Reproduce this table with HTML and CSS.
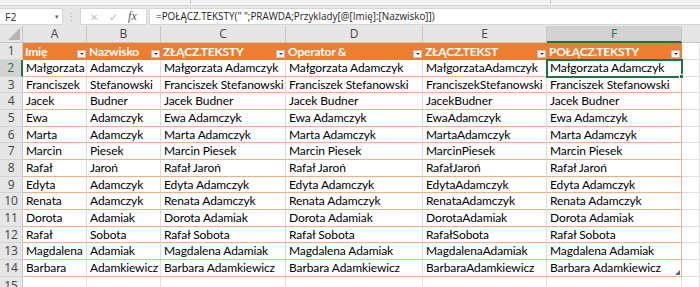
FILE: index.html
```html
<!DOCTYPE html>
<html lang="pl">
<head>
<meta charset="utf-8">
<title>Excel</title>
<link rel="stylesheet" href="styles.css">
</head>
<body>
<div class="app">
  <div class="ribbon-edge"><span class="tick t1"></span><span class="tick t2"></span></div>
  <div class="fbar">
    <div class="namebox"><span>F2</span><span class="nb-arrow">▾</span></div>
    <div class="dots">⋮</div>
    <div class="fbtns">
      <span class="fb-x">✕</span>
      <span class="fb-ok">✓</span>
      <span class="fb-fx">fx</span>
    </div>
    <div class="finput">=POŁĄCZ.TEKSTY(" ";PRAWDA;Przyklady[@[Imię]:[Nazwisko]])</div>
  </div>
  <div class="sheet">
    <div class="corner"><span class="corner-tri"></span></div>
    <div class="ch">A</div><div class="ch">B</div><div class="ch">C</div><div class="ch">D</div><div class="ch">E</div><div class="ch ch-sel">F</div><div class="ch ch-rest"></div>

    <div class="rh">1</div>
    <div class="th">Imię<span class="flt"></span></div>
    <div class="th">Nazwisko<span class="flt"></span></div>
    <div class="th">ZŁĄCZ.TEKSTY<span class="flt"></span></div>
    <div class="th">Operator &amp;<span class="flt"></span></div>
    <div class="th">ZŁĄCZ.TEKST<span class="flt"></span></div>
    <div class="th th-last">POŁĄCZ.TEKSTY<span class="flt"></span></div>
    <div class="g"></div>

    <div class="rh rh-sel">2</div>
    <div class="c">Małgorzata</div><div class="c">Adamczyk</div><div class="c">Małgorzata Adamczyk</div><div class="c">Małgorzata Adamczyk</div><div class="c">MałgorzataAdamczyk</div><div class="c cl sel">Małgorzata Adamczyk<span class="handle"></span></div><div class="g"></div>

    <div class="rh">3</div>
    <div class="c">Franciszek</div><div class="c">Stefanowski</div><div class="c">Franciszek Stefanowski</div><div class="c">Franciszek Stefanowski</div><div class="c">FranciszekStefanowski</div><div class="c cl">Franciszek Stefanowski</div><div class="g"></div>

    <div class="rh">4</div>
    <div class="c">Jacek</div><div class="c">Budner</div><div class="c">Jacek Budner</div><div class="c">Jacek Budner</div><div class="c">JacekBudner</div><div class="c cl">Jacek Budner</div><div class="g"></div>

    <div class="rh">5</div>
    <div class="c">Ewa</div><div class="c">Adamczyk</div><div class="c">Ewa Adamczyk</div><div class="c">Ewa Adamczyk</div><div class="c">EwaAdamczyk</div><div class="c cl">Ewa Adamczyk</div><div class="g"></div>

    <div class="rh">6</div>
    <div class="c">Marta</div><div class="c">Adamczyk</div><div class="c">Marta Adamczyk</div><div class="c">Marta Adamczyk</div><div class="c">MartaAdamczyk</div><div class="c cl">Marta Adamczyk</div><div class="g"></div>

    <div class="rh">7</div>
    <div class="c">Marcin</div><div class="c">Piesek</div><div class="c">Marcin Piesek</div><div class="c">Marcin Piesek</div><div class="c">MarcinPiesek</div><div class="c cl">Marcin Piesek</div><div class="g"></div>

    <div class="rh">8</div>
    <div class="c">Rafał</div><div class="c">Jaroń</div><div class="c">Rafał Jaroń</div><div class="c">Rafał Jaroń</div><div class="c">RafałJaroń</div><div class="c cl">Rafał Jaroń</div><div class="g"></div>

    <div class="rh">9</div>
    <div class="c">Edyta</div><div class="c">Adamczyk</div><div class="c">Edyta Adamczyk</div><div class="c">Edyta Adamczyk</div><div class="c">EdytaAdamczyk</div><div class="c cl">Edyta Adamczyk</div><div class="g"></div>

    <div class="rh">10</div>
    <div class="c">Renata</div><div class="c">Adamczyk</div><div class="c">Renata Adamczyk</div><div class="c">Renata Adamczyk</div><div class="c">RenataAdamczyk</div><div class="c cl">Renata Adamczyk</div><div class="g"></div>

    <div class="rh">11</div>
    <div class="c">Dorota</div><div class="c">Adamiak</div><div class="c">Dorota Adamiak</div><div class="c">Dorota Adamiak</div><div class="c">DorotaAdamiak</div><div class="c cl">Dorota Adamiak</div><div class="g"></div>

    <div class="rh">12</div>
    <div class="c">Rafał</div><div class="c">Sobota</div><div class="c">Rafał Sobota</div><div class="c">Rafał Sobota</div><div class="c">RafałSobota</div><div class="c cl">Rafał Sobota</div><div class="g"></div>

    <div class="rh">13</div>
    <div class="c">Magdalena</div><div class="c">Adamiak</div><div class="c">Magdalena Adamiak</div><div class="c">Magdalena Adamiak</div><div class="c">MagdalenaAdamiak</div><div class="c cl">Magdalena Adamiak</div><div class="g"></div>

    <div class="rh">14</div>
    <div class="c">Barbara</div><div class="c">Adamkiewicz</div><div class="c">Barbara Adamkiewicz</div><div class="c">Barbara Adamkiewicz</div><div class="c">BarbaraAdamkiewicz</div><div class="c cl last">Barbara Adamkiewicz<span class="resize"></span></div><div class="g"></div>

    <div class="rh rh-part">15</div>
    <div class="g"></div><div class="g"></div><div class="g"></div><div class="g"></div><div class="g"></div><div class="g"></div><div class="g"></div>
  </div>
</div>
</body>
</html>
```

FILE: styles.css
```css
* { box-sizing: border-box; }
html, body { margin: 0; padding: 0; }
body {
  width: 700px;
  height: 287px;
  overflow: hidden;
  background: #ffffff;
  font-family: Lato, "Liberation Sans", sans-serif;
}
.app { width: 700px; height: 287px; overflow: hidden; background: #e6e6e6; }

.ribbon-edge {
  position: relative;
  height: 6px;
  background: #f3f3f3;
  border-bottom: 1px solid #d9d9d9;
}
.tick { position: absolute; top: 0; width: 1px; height: 4px; background: #c8c8c8; }
.t1 { left: 190px; }
.t2 { left: 550px; }

.fbar {
  display: flex;
  align-items: center;
  height: 20px;
  background: #e6e6e6;
  padding-top: 1px;
}
.namebox {
  width: 63px;
  height: 17px;
  background: #ffffff;
  border: 1px solid #d6d6d6;
  border-left: none;
  display: flex;
  align-items: center;
  justify-content: space-between;
  padding: 0 3px 0 5px;
  font-family: "Open Sans", "Liberation Sans", sans-serif;
  font-size: 10.5px;
  color: #333;
}
.nb-arrow { font-size: 7px; color: #666; }
.dots {
  width: 17px;
  text-align: center;
  color: #b0b0b0;
  font-size: 11px;
  line-height: 1;
}
.fbtns {
  width: 67px;
  height: 17px;
  background: #ffffff;
  border: 1px solid #d6d6d6;
  display: flex;
  align-items: center;
  justify-content: space-around;
  padding: 0 4px;
  color: #bdbdbd;
  font-size: 11px;
}
.fb-x { font-size: 10px; }
.fb-fx { font-family: "Liberation Serif", serif; font-style: italic; color: #555; font-size: 12px; }
.finput {
  flex: 1;
  height: 17px;
  margin-left: 2px;
  background: #ffffff;
  border: 1px solid #d6d6d6;
  border-right: none;
  padding-left: 6px;
  font-family: "Open Sans", "Liberation Sans", sans-serif;
  font-size: 9.9px;
  line-height: 15px;
  color: #222;
  white-space: nowrap;
}

.sheet {
  display: grid;
  grid-template-columns: 23px 64px 74px 125px 137px 124px 135px 1fr;
  grid-template-rows: 17px 17px 17px 16px 17px 17px 16px 17px 17px 16px 17px 17px 16px 17px 17px 16px;
  font-size: 12px;
  letter-spacing: -0.1px;
  background: #ffffff;
}
.corner {
  position: relative;
  background: #e6e6e6;
  border-right: 1px solid #c6c6c6;
  border-bottom: 1px solid #c6c6c6;
}
.corner-tri {
  position: absolute;
  right: 2px;
  bottom: 2px;
  width: 0;
  height: 0;
  border-left: 12px solid transparent;
  border-bottom: 12px solid #b5b5b5;
}
.ch {
  background: #e6e6e6;
  border-right: 1px solid #c6c6c6;
  border-bottom: 1px solid #c6c6c6;
  color: #444;
  text-align: center;
  font-family: "Open Sans", "Liberation Sans", sans-serif;
  font-size: 12px;
  letter-spacing: 0;
  line-height: 16px;
}
.ch-sel {
  background: #d2d2d2;
  color: #217346;
  border-bottom: 2px solid #217346;
  line-height: 15px;
}
.ch-rest { border-right: none; }
.rh {
  background: #e6e6e6;
  border-right: 1px solid #c6c6c6;
  border-bottom: 1px solid #d4d4d4;
  color: #444;
  text-align: center;
  font-family: "Open Sans", "Liberation Sans", sans-serif;
  font-size: 12px;
  letter-spacing: -0.2px;
  line-height: 16px;
  white-space: nowrap;
  overflow: hidden;
}
.rh-part { line-height: 18px; }
.rh-sel {
  background: #d2d2d2;
  color: #217346;
  border-right: 2px solid #217346;
}
.th {
  position: relative;
  background: #ed7d31;
  color: #ffffff;
  font-weight: bold;
  letter-spacing: -0.2px;
  padding-left: 2px;
  line-height: 17px;
  white-space: nowrap;
}
.th-last { border-right: 1px solid #ed7d31; }
.flt {
  position: absolute;
  right: 1px;
  top: 7px;
  width: 9px;
  height: 8px;
  background: #f2f2f2;
  border: 1px solid #bfbfbf;
}
.flt::after {
  content: "";
  position: absolute;
  left: 2px;
  top: 2px;
  border-left: 2px solid transparent;
  border-right: 2px solid transparent;
  border-top: 2px solid #444;
}
.c {
  position: relative;
  background: #ffffff;
  color: #000;
  border-right: 1px solid #dcdcdc;
  border-bottom: 1px solid #f4b084;
  padding-left: 3px;
  line-height: 16px;
  white-space: nowrap;
}
.cl { border-right: 1px solid #f4b084; }
.sel {
  outline: 2px solid #217346;
  outline-offset: -1px;
  z-index: 1;
}
.handle {
  position: absolute;
  right: -3px;
  bottom: -3px;
  width: 5px;
  height: 5px;
  background: #217346;
  border: 1px solid #fff;
}
.resize {
  position: absolute;
  right: 1px;
  bottom: 1px;
  width: 0;
  height: 0;
  border-left: 5px solid transparent;
  border-bottom: 5px solid #4a64a8;
}
.g {
  background: #ffffff;
  border-right: 1px solid #e1e1e1;
  border-bottom: 1px solid #e1e1e1;
}
```
